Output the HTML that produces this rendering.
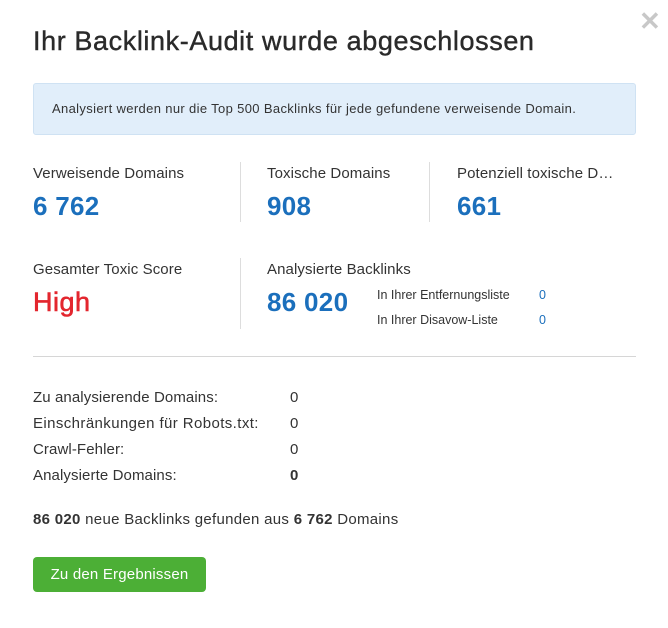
<!DOCTYPE html>
<html><head><meta charset="utf-8"><style>
body{margin:0;width:668px;height:628px;background:#fff;font-family:"Liberation Sans",sans-serif;color:#333;position:relative;overflow:hidden}
.a{position:absolute;white-space:nowrap;line-height:1}
.lbl{font-size:15px;letter-spacing:0.1px}
.num{font-size:26px;font-weight:bold;color:#1b6fbc;letter-spacing:0.3px}
.vd{position:absolute;width:1px;background:#ddd}
.sm{font-size:12.5px;letter-spacing:0px}
</style></head><body>
<div class="a" style="left:639px;top:8px;font-size:26px;color:#c8c8c8;font-weight:bold">✕</div>
<div class="a" style="left:33px;top:28px;font-size:27px;color:#2a2a2a;letter-spacing:0.6px;-webkit-text-stroke:0.4px #2a2a2a">Ihr Backlink-Audit wurde abgeschlossen</div>
<div style="position:absolute;left:33px;top:83px;width:601px;height:50px;background:#e1eefa;border:1px solid #cfe2f3;border-radius:3px"></div>
<div class="a" style="left:52px;top:102px;font-size:13px;letter-spacing:0.35px">Analysiert werden nur die Top 500 Backlinks für jede gefundene verweisende Domain.</div>

<div class="a lbl" style="left:33px;top:166px">Verweisende Domains</div>
<div class="a num" style="left:33px;top:193px">6 762</div>
<div class="vd" style="left:240px;top:162px;height:60px"></div>
<div class="a lbl" style="left:267px;top:166px">Toxische Domains</div>
<div class="a num" style="left:267px;top:193px">908</div>
<div class="vd" style="left:429px;top:162px;height:60px"></div>
<div class="a lbl" style="left:457px;top:166px">Potenziell toxische D…</div>
<div class="a num" style="left:457px;top:193px">661</div>

<div class="a lbl" style="left:33px;top:262px">Gesamter Toxic Score</div>
<div class="a num" style="left:33px;top:289px;color:#e3262e;font-size:27px;letter-spacing:0.5px;font-weight:normal;-webkit-text-stroke:0.6px #e3262e">High</div>
<div class="vd" style="left:240px;top:258px;height:71px"></div>
<div class="a lbl" style="left:267px;top:262px">Analysierte Backlinks</div>
<div class="a num" style="left:267px;top:289px">86 020</div>
<div class="a sm" style="left:377px;top:289px">In Ihrer Entfernungsliste</div>
<div class="a sm" style="left:539px;top:289px;color:#1b6fbc">0</div>
<div class="a sm" style="left:377px;top:314px">In Ihrer Disavow-Liste</div>
<div class="a sm" style="left:539px;top:314px;color:#1b6fbc">0</div>

<div style="position:absolute;left:33px;top:356px;width:603px;height:1px;background:#d6d6d6"></div>

<div class="a lbl" style="left:33px;top:390px">Zu analysierende Domains:</div><div class="a lbl" style="left:290px;top:390px">0</div>
<div class="a lbl" style="left:33px;top:416px;letter-spacing:0.4px">Einschränkungen für Robots.txt:</div><div class="a lbl" style="left:290px;top:416px">0</div>
<div class="a lbl" style="left:33px;top:442px">Crawl-Fehler:</div><div class="a lbl" style="left:290px;top:442px">0</div>
<div class="a lbl" style="left:33px;top:468px">Analysierte Domains:</div><div class="a lbl" style="left:290px;top:468px;font-weight:bold">0</div>

<div class="a lbl" style="left:33px;top:512px;letter-spacing:0.3px"><b>86 020</b> neue Backlinks gefunden aus <b>6 762</b> Domains</div>

<div style="position:absolute;left:33px;top:557px;width:173px;height:35px;background:#4caf36;border-radius:4px"></div>
<div class="a" style="left:33px;width:173px;text-align:center;top:567px;font-size:15px;color:#fff;letter-spacing:0.2px">Zu den Ergebnissen</div>
</body></html>
